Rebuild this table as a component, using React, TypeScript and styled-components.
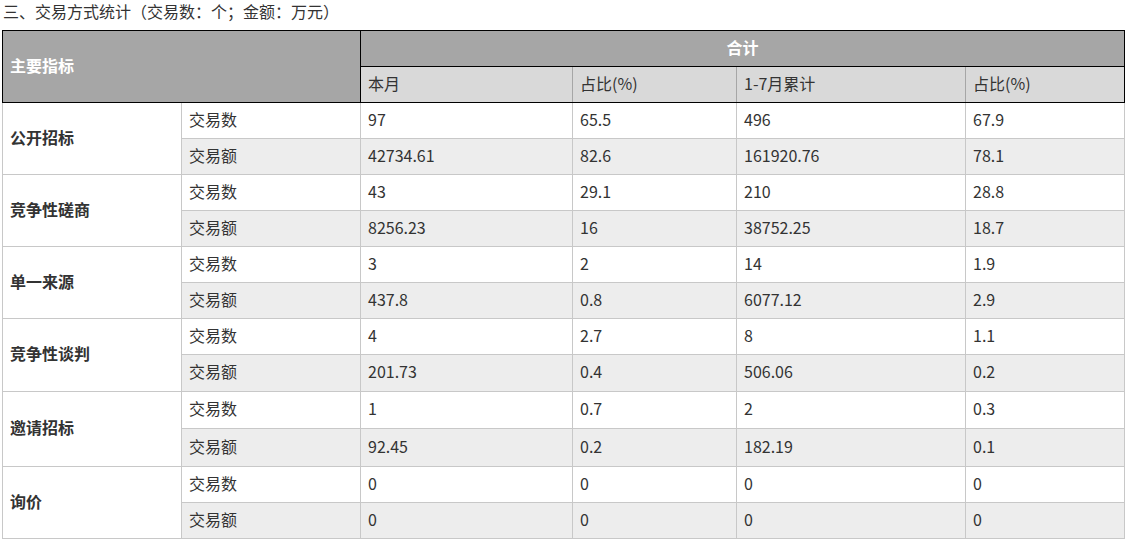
import styled, { createGlobalStyle } from "styled-components";

const GlobalStyle = createGlobalStyle`
  html, body {
    margin: 0;
    padding: 0;
    background: #ffffff;
  }
  body {
    font-family: "Noto Sans CJK SC", "Noto Sans", sans-serif;
    color: #333333;
  }
`;

type Row = { label: string; values: string[]; height: number };
type Group = { name: string; rows: Row[] };

const colWidths = [179, 179, 212, 164, 229, 159];

const groups: Group[] = [
  {
    name: "公开招标",
    rows: [
      { label: "交易数", values: ["97", "65.5", "496", "67.9"], height: 36 },
      { label: "交易额", values: ["42734.61", "82.6", "161920.76", "78.1"], height: 36 },
    ],
  },
  {
    name: "竞争性磋商",
    rows: [
      { label: "交易数", values: ["43", "29.1", "210", "28.8"], height: 36 },
      { label: "交易额", values: ["8256.23", "16", "38752.25", "18.7"], height: 36 },
    ],
  },
  {
    name: "单一来源",
    rows: [
      { label: "交易数", values: ["3", "2", "14", "1.9"], height: 36 },
      { label: "交易额", values: ["437.8", "0.8", "6077.12", "2.9"], height: 36 },
    ],
  },
  {
    name: "竞争性谈判",
    rows: [
      { label: "交易数", values: ["4", "2.7", "8", "1.1"], height: 36 },
      { label: "交易额", values: ["201.73", "0.4", "506.06", "0.2"], height: 37 },
    ],
  },
  {
    name: "邀请招标",
    rows: [
      { label: "交易数", values: ["1", "0.7", "2", "0.3"], height: 37 },
      { label: "交易额", values: ["92.45", "0.2", "182.19", "0.1"], height: 38 },
    ],
  },
  {
    name: "询价",
    rows: [
      { label: "交易数", values: ["0", "0", "0", "0"], height: 36 },
      { label: "交易额", values: ["0", "0", "0", "0"], height: 36 },
    ],
  },
];

const App = () => {
  return (
    <Page>
      <GlobalStyle />
      <Caption>三、交易方式统计（交易数：个；金额：万元）</Caption>
      <Table>
        <colgroup>
          {colWidths.map((w, i) => (
            <Col key={i} $w={w} />
          ))}
        </colgroup>
        <thead>
          <HeaderRow>
            <HeadCell colSpan={2} rowSpan={2}>
              主要指标
            </HeadCell>
            <HeadCell colSpan={4} $center>
              合计
            </HeadCell>
          </HeaderRow>
          <HeaderRow>
            <SubHead>本月</SubHead>
            <SubHead>占比(%)</SubHead>
            <SubHead $dark>1-7月累计</SubHead>
            <SubHead>占比(%)</SubHead>
          </HeaderRow>
        </thead>
        <tbody>
          {groups.map((g) =>
            g.rows.map((r, i) => (
              <BodyRow key={g.name + r.label} $shade={i === 1} $h={r.height}>
                {i === 0 && <GroupCell rowSpan={2}>{g.name}</GroupCell>}
                <Cell>{r.label}</Cell>
                {r.values.map((v, j) => (
                  <Cell key={j}>{v}</Cell>
                ))}
              </BodyRow>
            ))
          )}
        </tbody>
      </Table>
    </Page>
  );
};

export default App;

const Page = styled.div`
  padding: 0 2px;
`;

const Caption = styled.div`
  font-size: 16px;
  line-height: 22px;
  height: 30px;
  padding-left: 1px;
  color: #333333;
`;

const Table = styled.table`
  border-collapse: collapse;
  table-layout: fixed;
  width: 1122px;
  font-size: 16px;
`;

const Col = styled.col<{ $w: number }>`
  width: ${(p) => p.$w}px;
`;

const HeaderRow = styled.tr`
  height: 36px;
`;

const HeadCell = styled.th<{ $center?: boolean }>`
  background: #a6a6a6;
  color: #ffffff;
  font-weight: 700;
  padding: 0 7px 4px;
  border: 1px solid #000000;
  text-align: ${(p) => (p.$center ? "center" : "left")};
  vertical-align: middle;
`;

const SubHead = styled.th<{ $dark?: boolean }>`
  background: #d9d9d9;
  color: #333333;
  font-weight: 400;
  padding: 0 7px 4px;
  text-align: left;
  border-top: 1px solid #000000;
  border-bottom: 1px solid #000000;
  border-left: 1px solid ${(p) => (p.$dark ? "#000000" : "#a6a6a6")};
  border-right: 1px solid #a6a6a6;
  &:last-child {
    border-right: 1px solid #000000;
  }
`;

const BodyRow = styled.tr<{ $shade: boolean; $h: number }>`
  height: ${(p) => p.$h}px;
  background: ${(p) => (p.$shade ? "#ededed" : "#ffffff")};
`;

const Cell = styled.td`
  padding: 0 7px 4px;
  border: 1px solid #c8c8c8;
  vertical-align: middle;
  color: #333333;
  white-space: nowrap;
`;

const GroupCell = styled(Cell)`
  background: #ffffff;
  font-weight: 700;
`;
